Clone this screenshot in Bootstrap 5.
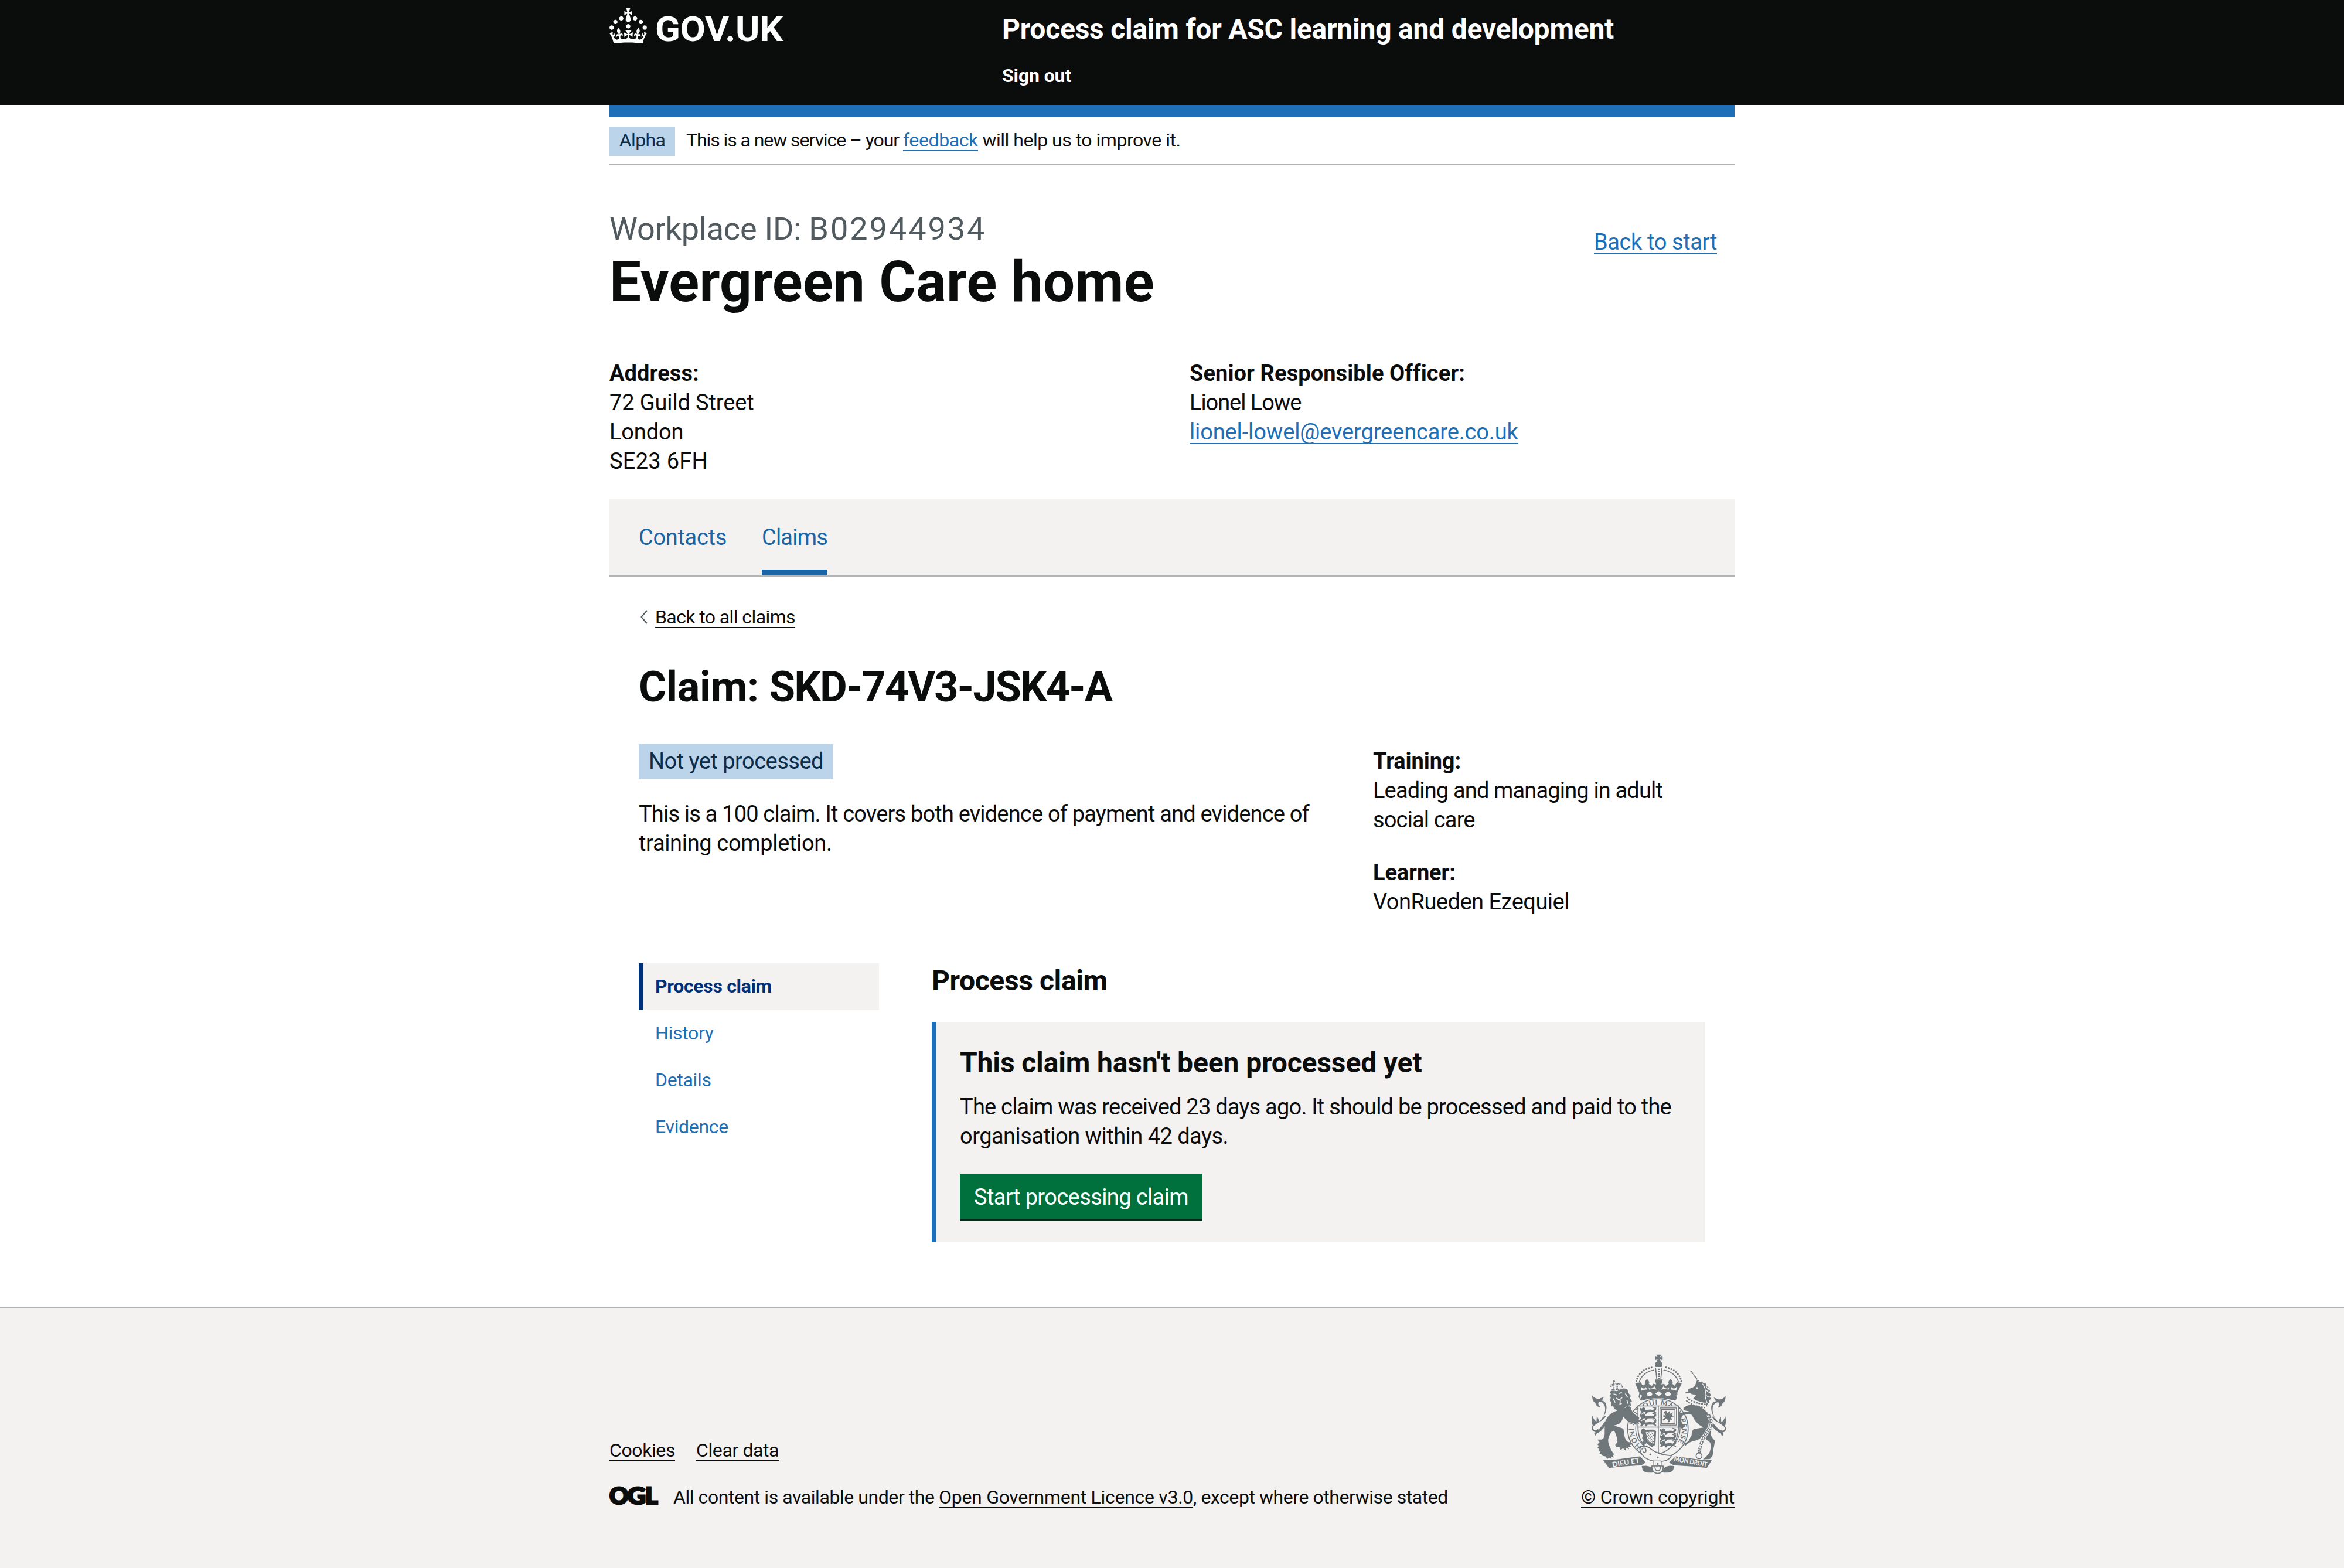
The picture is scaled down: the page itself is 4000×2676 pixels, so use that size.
<!DOCTYPE html>
<html lang="en">
<head>
<meta charset="utf-8">
<meta name="viewport" content="width=device-width, initial-scale=1">
<title>Process claim for ASC learning and development</title>
<link href="https://cdn.jsdelivr.net/npm/bootstrap@5.3.0/dist/css/bootstrap.min.css" rel="stylesheet">
<style>
  :root { --ink:#0b0c0c; --blue:#1d70b8; --grey:#f3f2f1; --rule:#b1b4b6; }
  body { font-family: Roboto, "Liberation Sans", sans-serif; font-size: 38px; line-height: 50px; color: var(--ink); background: #fff; letter-spacing: -.0035em; }
  p, h1, h2, h3, ul { margin: 0; }
  a { color: var(--blue); text-decoration-thickness: 2px; text-underline-offset: 6px; text-decoration-skip-ink: none; }
  a.ink { color: var(--ink); }
  .page-width { width: 1920px; margin: 0 auto; }
  .s32 { font-size: 32px; line-height: 40px; }
  .s48 { font-size: 48px; line-height: 60px; font-weight: 700; }
  .nowrap-line { white-space: nowrap; }

  /* header */
  .site-header { background: var(--ink); height: 180px; color: #fff; }
  .site-header a { color: #fff; text-decoration: none; }
  .logo-col { width: 670px; padding-top: 14px; }
  .logo-col svg { display: block; }
  .service-col { padding-top: 20px; }
  .service-name { letter-spacing: -.0049em; }
  .sign-out { margin-top: 29px; font-weight: 700; }
  .blue-bar { height: 20px; background: var(--blue); }

  /* phase banner */
  .phase { height: 82px; padding-top: 16px; gap: 19px; border-bottom: 2px solid var(--rule); font-size: 32px; line-height: 46px; }
  .phase-tag { width: 112px; height: 50px; text-align: center; background: #bbd4ea; color: #0c2d4a; letter-spacing: -.02em; }
  .ls-phase1 { letter-spacing: -.0337em; }
  .ls-phase2 { letter-spacing: -.0154em; }
  .ls-12 { letter-spacing: -.012em; }

  /* workplace heading */
  .workplace { padding-top: 79px; }
  .caption-id { font-size: 54px; line-height: 60px; color: #505a5f; letter-spacing: -.004em; }
  .caption-id span { letter-spacing: .055em; }
  .workplace-name { font-size: 96px; line-height: 100px; font-weight: 700; margin-top: 10px; letter-spacing: .003em; }
  .back-start { margin: 27px 30px 0 0; letter-spacing: -.0102em; }
  .contact-grid { padding: 81px 0 40px; }
  .contact-grid strong { letter-spacing: .002em; }
  .address-col { width: 990px; }
  .postcode { letter-spacing: .0073em; }
  .officer { letter-spacing: -.028em; }

  /* tabs */
  .tab-bar { background: var(--grey); border-bottom: 2px solid var(--rule); padding-left: 50px; gap: 60px; height: 132px; }
  .tab-bar a { color: #1a65a6; text-decoration: none; padding-top: 40px; letter-spacing: -.008em; }
  .tab-bar a.current { border-bottom: 10px solid #1a65a6; letter-spacing: -.0212em; }

  /* claim */
  .claim { padding: 49px 50px 0; }
  .back-all { gap: 13px; letter-spacing: -.0187em; padding-left: 3px; }
  .claim-title { font-size: 72px; line-height: 80px; font-weight: 700; margin: 60px 0 57px; letter-spacing: -.003em; }
  .claim-title span { letter-spacing: -.0265em; }
  .claim-left { width: 1253px; }
  .status-tag { display: inline-block; width: 332px; height: 60px; line-height: 58px; text-align: center; background: #bbd4ea; color: #0c2d4a; letter-spacing: -.0135em; vertical-align: top; }
  .claim-text { width: 1180px; margin-top: 34px; letter-spacing: -.0215em; }
  .claim-text span { letter-spacing: -.009em; }
  .claim-right { padding-top: 4px; }
  .claim-right strong { letter-spacing: -.003em; }
  .claim-right p + p { margin-top: 40px; }
  .tight { letter-spacing: -.0223em; }
  .ls-13 { letter-spacing: -.0132em; }
  .claim-body { margin-top: 80px; gap: 90px; }

  /* side navigation */
  .side-nav { width: 410px; font-size: 32px; line-height: 78px; letter-spacing: -.01em; }
  .side-nav a { display: block; height: 80px; padding-left: 20px; border-left: 8px solid transparent; text-decoration: none; }
  .side-nav a.current { color: #003078; border-color: #003078; background: var(--grey); font-weight: 700; }

  /* panel */
  .main-col { width: 1320px; }
  .main-title { letter-spacing: -.008em; }
  .status-panel { margin-top: 40px; border-left: 8px solid var(--blue); background: var(--grey); padding: 40px; height: 376px; }
  .status-panel p { margin-top: 20px; letter-spacing: -.0206em; }
  .status-panel p span { letter-spacing: -.014em; }
  .start-btn { margin-top: 40px; width: 414px; height: 76px; padding: 0; border: 0; border-radius: 0; background: #00703c; color: #fff; font-size: 38px; line-height: 78px; box-shadow: 0 4px 0 #002d18; letter-spacing: -.0161em; text-decoration: none; }

  /* footer */
  .site-footer { margin-top: 110px; height: 446px; border-top: 2px solid var(--rule); background: var(--grey); }
  .footer-row { height: 343px; }
  .footer-links { gap: 36px; margin-bottom: 40px; letter-spacing: -.0125em; }
  .licence { letter-spacing: -.0137em; }
  .licence a { letter-spacing: -.0092em; }
  .ogl { margin-right: 27px; display: block; margin-top: 1px; }
  .crest { width: 262px; letter-spacing: -.0055em; }
  .crest svg { display: block; margin: 0 auto 19px; }
</style>
</head>
<body>
<header class="site-header">
  <div class="page-width d-flex">
    <a class="logo-col" href="#" aria-label="GOV.UK">
      <svg width="320" height="80" viewBox="0 0 160 40" fill="#fff">
        <path fill-rule="evenodd" d="M22.6 10.4c-1 .4-2-.1-2.4-1-.4-.9.1-2 1-2.4.9-.4 2 .1 2.4 1s-.1 2-1 2.4m-5.9 6.7c-.9.4-2-.1-2.4-1-.4-.9.1-2 1-2.4.9-.4 2 .1 2.4 1s-.1 2-1 2.4m10.8-3.7c-1 .4-2-.1-2.4-1-.4-.9.1-2 1-2.4.9-.4 2 .1 2.4 1s0 2-1 2.4m3.3 4.8c-1 .4-2-.1-2.4-1-.4-.9.1-2 1-2.4.9-.4 2 .1 2.4 1s-.1 2-1 2.4M17 4.7l2.3 1.2V2.5l-2.3.7-.2-.2.9-3h-3.4l.9 3-.2.2c-.1.1-2.3-.7-2.3-.7v3.4L15 4.7c.1.1.1.2.2.2l-1.3 4c-.1.2-.1.4-.1.6 0 1.1.8 2 1.9 2.2h.7c1-.2 1.9-1.1 1.9-2.1 0-.2 0-.4-.1-.6l-1.3-4c-.1-.2 0-.2.1-.3m-7.6 5.7c.9.4 2-.1 2.4-1 .4-.9-.1-2-1-2.4-.9-.4-2 .1-2.4 1s0 2 1 2.4m-5 3c.9.4 2-.1 2.4-1 .4-.9-.1-2-1-2.4-.9-.4-2 .1-2.4 1s.1 2 1 2.4m-3.2 4.8c.9.4 2-.1 2.4-1 .4-.9-.1-2-1-2.4-.9-.4-2 .1-2.4 1s0 2 1 2.4m14.8 11c4.4 0 8.6.3 12.3.8 1.1-4.5 2.4-7 3.7-8.8l-2.5-.9c.2 1.3.3 1.9 0 2.7-.4-.4-.8-1.1-1.1-2.3l-1.2 4c.7-.5 1.3-.8 2-.9-1.1 2.5-2.6 3.1-3.5 3-1.1-.2-1.7-1.2-1.5-2.1.3-1.2 1.5-1.5 2.1-.1 1.1-2.3-.8-3-2-2.3 1.9-1.9 2.1-3.5.6-5.6-2.1 1.6-2.1 3.2-1.2 5.5-1.2-1.4-3.2-.6-2.5 1.6.9-1.4 2.1-.5 1.9.8-.2 1.1-1.7 2.1-3.5 1.9-2.7-.2-2.9-2.1-2.9-3.6.7-.1 1.9.5 2.9 1.9l.4-4.3c-1.1 1.1-2.1 1.4-3.2 1.4.4-1.2 2.1-3 2.1-3h-5.4s1.7 1.9 2.1 3c-1.1 0-2.1-.2-3.2-1.4l.4 4.3c1-1.4 2.2-2 2.9-1.9-.1 1.5-.2 3.4-2.9 3.6-1.9.2-3.4-.8-3.5-1.9-.2-1.3 1-2.2 1.9-.8.7-2.3-1.2-3-2.5-1.6.9-2.2.9-3.9-1.2-5.5-1.5 2-1.3 3.7.6 5.6-1.2-.7-3.1 0-2 2.3.6-1.4 1.8-1.1 2.1.1.2.9-.3 1.9-1.5 2.1-.9.2-2.4-.5-3.5-3 .6 0 1.2.3 2 .9l-1.2-4c-.3 1.1-.7 1.9-1.1 2.3-.3-.8-.2-1.4 0-2.7l-2.9.9C1.3 23 2.6 25.5 3.7 30c3.7-.5 7.9-.8 12.3-.8"/>
        <text x="39" y="28" font-family="Roboto" font-weight="700" font-size="29.5" textLength="109" lengthAdjust="spacingAndGlyphs">GOV.UK</text>
      </svg>
    </a>
    <div class="service-col">
      <div class="s48 service-name"><a href="#">Process claim for ASC learning and development</a></div>
      <div class="s32 sign-out"><a href="#">Sign out</a></div>
    </div>
  </div>
</header>

<div class="page-width">
  <div class="blue-bar"></div>
  <div class="phase d-flex align-items-start">
    <div class="phase-tag">Alpha</div>
    <div class="nowrap-line"><span class="ls-phase1">This is a new service – your </span><a class="ls-12" href="#">feedback</a><span class="ls-phase2"> will help us to improve it.</span></div>
  </div>

  <main>
    <div class="workplace d-flex justify-content-between align-items-start">
      <div>
        <div class="caption-id">Workplace ID: <span>B02944934</span></div>
        <h1 class="workplace-name">Evergreen Care home</h1>
      </div>
      <a class="back-start" href="#">Back to start</a>
    </div>
    <div class="contact-grid d-flex">
      <div class="address-col"><strong>Address:</strong><br>72 Guild Street<br>London<br><span class="postcode">SE23 6FH</span></div>
      <div><strong>Senior Responsible Officer:</strong><br><span class="officer">Lionel Lowe</span><br><a href="#">lionel-lowel@evergreencare.co.uk</a></div>
    </div>

    <nav class="tab-bar d-flex">
      <a href="#">Contacts</a>
      <a class="current" href="#">Claims</a>
    </nav>

    <section class="claim">
      <div class="back-all s32 d-flex align-items-center">
        <svg width="12" height="24" viewBox="0 0 12 24" fill="none" stroke="#505a5f" stroke-width="2"><path d="M11 1L1.5 12L11 23"/></svg>
        <a class="ink" href="#">Back to all claims</a>
      </div>
      <h2 class="claim-title">Claim: <span>SKD-74V3-JSK4-A</span></h2>
      <div class="d-flex">
        <div class="claim-left">
          <span class="status-tag">Not yet processed</span>
          <p class="claim-text">This is a 100 claim. It covers both evidence of payment and evidence of<br><span>training completion.</span></p>
        </div>
        <div class="claim-right">
          <p class="tight"><strong>Training:</strong><br>Leading and managing in adult<br>social care</p>
          <p class="ls-13"><strong>Learner:</strong><br>VonRueden Ezequiel</p>
        </div>
      </div>
      <div class="claim-body d-flex align-items-start">
        <nav class="side-nav">
          <a class="current" href="#">Process claim</a>
          <a href="#">History</a>
          <a href="#">Details</a>
          <a href="#">Evidence</a>
        </nav>
        <div class="main-col">
          <h2 class="s48 main-title">Process claim</h2>
          <div class="status-panel">
            <h3 class="s48">This claim hasn't been processed yet</h3>
            <p>The claim was received 23 days ago. It should be processed and paid to the<br><span>organisation within 42 days.</span></p>
            <a class="btn start-btn" href="#">Start processing claim</a>
          </div>
        </div>
      </div>
    </section>
  </main>
</div>

<footer class="site-footer">
  <div class="page-width footer-row d-flex justify-content-between align-items-end s32">
    <div>
      <div class="footer-links d-flex"><a class="ink" href="#">Cookies</a><a class="ink" href="#">Clear data</a></div>
      <div class="licence d-flex align-items-start">
        <svg class="ogl" width="82" height="34" viewBox="0 0 82 34" overflow="visible" fill="#0b0c0c" stroke="#0b0c0c" font-family="Lato" font-weight="900" font-size="39">
          <text x="0" y="31" stroke-width="3" textLength="32" lengthAdjust="spacingAndGlyphs">O</text>
          <text x="30.500" y="31" stroke-width="3" textLength="31" lengthAdjust="spacingAndGlyphs">G</text>
          <text x="61" y="31" stroke-width="3" textLength="21" lengthAdjust="spacingAndGlyphs">L</text>
        </svg>
        <div class="nowrap-line">All content is available under the <a class="ink" href="#">Open Government Licence v3.0</a>, except where otherwise stated</div>
      </div>
    </div>
    <div class="crest nowrap-line">
      <svg width="233" height="205" viewBox="160 64 700 616" fill="#6f777b" stroke="none" role="img" aria-label="Royal coat of arms">
        <!-- garter -->
        <ellipse cx="509" cy="446" rx="155" ry="153" fill="#f3f2f1" stroke="#6f777b" stroke-width="5"/>
        <ellipse cx="509" cy="446" rx="114" ry="114" fill="none" stroke="#6f777b" stroke-width="4"/>
        <path id="garter" d="M426 537A123 123 0 1 1 600 529" fill="none"/>
        <text font-family="Lato" font-weight="700" font-size="36"><textPath href="#garter" startOffset="0" textLength="560">HONI SOIT QUI MAL Y PENSE</textPath></text>
        <!-- shield -->
        <path d="M407 330H614V440C614 510 575 560 511 578C447 560 407 510 407 440Z" fill="#f3f2f1" stroke="#6f777b" stroke-width="5"/>
        <path d="M511 330V578M407 438H614" stroke="#6f777b" stroke-width="5"/>
        <g id="three-lions">
          <g id="pass-lion"><path d="M416 338l10 5 8-7 11 6-3 9 28-3 14 3 8-9-12-4 1-4 20 4-1 12-9 9 10 4-2 6-16-8-26 1-8 9-8-2 3-9-9 2-8 8-10-2 8-9-6-6z"/></g>
          <use href="#pass-lion" y="32"/><use href="#pass-lion" y="64"/>
        </g>
        <use href="#three-lions" x="102" y="108"/>
        <rect x="520" y="340" width="84" height="88" fill="none" stroke="#6f777b" stroke-width="4"/>
        <rect x="528" y="348" width="68" height="72" fill="none" stroke="#6f777b" stroke-width="3"/>
        <path d="M538 360l14-6 5 12 11-10 4 14 14-8-6 14 10 8-14 2 6 14-12 0 2 12-14 2 4-12-12-6-12 10-4-8 12-8-10-6 2-8 12 4z"/>
        <path d="M424 452l10-8 12 8 40-1 14 8-4 70-18 12-28-20-12 10-10-14 8-12-8-10 4-14-8-12z"/>
        <path d="M447 464l44-2-4 62-30-14z" fill="#f3f2f1"/>
        <path d="M452 466l36 50M462 464l27 38M474 464l16 22M450 480l36 42M450 496l26 26" stroke="#6f777b" stroke-width="3"/>
        <!-- crown -->
        <path d="M502 66h23l-5 14 13-5v20l-13-4 4 12c10 6 10 18 4 27h-30c-6-9-5-21 5-27l4-12-13 4V75l13 5z"/>
        <path d="M497 134l6 56M530 134l-6 56" stroke="#6f777b" stroke-width="5"/>
        <path d="M513.500 138V190" stroke="#6f777b" stroke-width="8" stroke-dasharray="7 5"/>
        <path d="M399 204C405 165 440 135 490 130M629 204C622 165 588 135 538 130" fill="none" stroke="#6f777b" stroke-width="9" stroke-linecap="round" stroke-dasharray=".1 14"/>
        <path d="M414 205C424 175 452 150 490 146M614 205C604 175 576 150 538 146" fill="none" stroke="#6f777b" stroke-width="5"/>
        <path d="M392 213l28-5 12 18 13-10c-8-10 4-18 8-26 6 8 16 16 9 26l16 12 8-12 14 4-6-26h40l-7 26 14-4 8 12 16-12c-7-10 3-18 9-26 5 8 16 16 9 26l12 10 12-18 25 5-24 50 3 20-13 20c-60-17-118-17-176 0l-12-20 4-20z"/>
        <path d="M420 222c4 20 22 24 28 10l5 14c-10-2-20 2-28 6zM460 232c6 14 24 10 30-4l12 18c-14-4-26-2-38 0zM608 222c-4 20-22 24-28 10l-5 14c10-2 20 2 28 6zM568 232c-6 14-24 10-30-4l-12 18c14-4 26-2 38 0z" fill="#f3f2f1"/>
        <path d="M513 254l17 13-17 12-17-12zM418 270l10 8-8 14-4-10zM612 270l-10 8 8 14 4-10z" fill="#f3f2f1"/>
        <ellipse cx="466" cy="269" rx="14" ry="11" fill="#f3f2f1"/><ellipse cx="561" cy="269" rx="14" ry="11" fill="#f3f2f1"/>
        <!-- lion -->
        <path d="M283 196v18M277 203h12" stroke="#6f777b" stroke-width="4"/>
        <path d="M268 232c2-20 56-26 60 2M272 248l52-4M283 214v34M300 218v28" fill="none" stroke="#6f777b" stroke-width="7" stroke-dasharray="6 4"/>
        <path d="M262 256l16-5 20 3 34-14 20 2 6 22 12 14-4 12 10 16-9 6 6 18-13-4-2 16-12-10-22 22-22-1-17-9-6-16-8 6-1-30-8 6 6-26-8-6 8-10z"/>
        <path d="M282 268l16 6M310 266l14-6M296 288l14 12 16-14M316 302l-2 18 10-2M342 266l12 20M280 292l10 20M350 300l6 18" fill="none" stroke="#f3f2f1" stroke-width="5"/>
        <path d="M312 340C340 352 352 326 368 334C374 352 380 370 402 380L414 390L410 398L420 408L410 412L412 422L400 418L392 426L384 416L366 414C350 408 340 392 330 384C328 410 312 426 284 430L332 446C336 462 334 478 340 492C346 508 352 516 366 516L380 524L366 530L372 542L356 538L362 552L346 544L342 558L330 546L318 556L314 542L296 540L290 530L302 514C300 492 292 466 284 456C272 460 268 466 262 478C252 498 252 512 258 528C264 546 272 560 276 566L286 580L276 580L284 594L270 590L272 602L258 594L250 602L240 588L226 586L218 578L208 578L214 564L204 562L208 550L198 546L206 534L198 526L210 518L200 502L220 502C230 500 234 490 236 476C236 452 236 434 238 412C246 386 270 362 300 354Z"/>
        <path d="M242 414C226 440 206 462 190 466" fill="none" stroke="#6f777b" stroke-width="14"/>
        <g id="tail">
          <path d="M190 464C166 460 162 434 184 424C210 414 234 388 238 354C242 324 226 308 210 308C200 310 202 328 214 334C206 338 192 330 188 314C174 306 172 290 172 276C184 292 196 292 208 294C216 288 226 288 234 282C226 292 228 298 220 302C240 304 250 324 244 352C240 372 232 384 222 392L244 378C236 396 224 404 208 412C196 420 178 428 176 440C176 452 186 456 196 452L204 446C202 456 196 464 190 484L182 470Z"/>
          <path d="M176 434C168 414 170 392 174 378C178 396 184 404 194 410L196 382C204 396 206 402 208 412Z"/>
        </g>
        <!-- unicorn -->
        <path d="M676 148L718 204" stroke="#6f777b" stroke-width="6" stroke-dasharray="9 3"/>
        <path d="M704 214L710 196L720 208L736 204L742 214L758 216L756 226L768 232L766 244L776 252L772 262L782 272L774 282L782 294L772 300L774 314L764 318L760 334L744 322C730 314 706 304 690 302C684 292 700 284 706 272L684 270L674 264L650 264L652 258L664 256L662 246C672 238 686 238 696 230Z"/>
        <circle cx="710" cy="238" r="5" fill="#f3f2f1"/>
        <path d="M738 216C750 232 756 250 752 270C750 286 756 300 762 316M756 228L764 240M758 250L770 260M756 276L770 284" fill="none" stroke="#f3f2f1" stroke-width="4"/>
        <path d="M640 352L640 340C656 326 678 318 704 326C738 336 770 362 782 396C790 420 788 440 780 458C776 474 782 490 802 508C798 528 796 544 792 560L790 584L776 602L740 604C756 590 770 578 776 562C782 540 782 524 772 512C756 500 742 492 734 486C726 500 706 508 688 510L664 520L650 534L640 522L662 514C672 504 672 494 682 480C682 466 684 456 694 448L742 440C712 424 694 402 684 376C664 368 644 370 632 382C628 396 628 408 632 416L644 434L634 448L622 438L616 420C616 400 614 380 622 366L670 358Z"/>
        <path d="M662 286C680 306 716 322 756 328" fill="none" stroke="#f3f2f1" stroke-width="26"/>
        <path d="M656 284C676 306 716 320 762 322M654 302C678 322 714 336 750 338" fill="none" stroke="#6f777b" stroke-width="7" stroke-dasharray="9 5"/>
        <path d="M780 414C800 440 814 456 832 464" fill="none" stroke="#6f777b" stroke-width="14"/>
        <use href="#tail" transform="matrix(-1 0 0 1 1028 3)"/>
        <path d="M768 374l14 30-6 36-32 50-16 40-8 40" fill="none" stroke="#f3f2f1" stroke-width="21"/>
        <path d="M768 374l14 30-6 36-32 50-16 40-8 40" fill="none" stroke="#6f777b" stroke-width="15" stroke-dasharray="20 5"/>
        <path d="M768 378l14 28-6 34-32 50-16 40-8 36" fill="none" stroke="#f3f2f1" stroke-width="6" stroke-dasharray="12 13"/>
        <circle cx="720" cy="586" r="15" fill="none" stroke="#6f777b" stroke-width="5"/>
        <!-- motto ribbon -->
        <path d="M228 607L270 608L418 588L446 620L424 634L330 640L258 648Z"/>
        <path d="M786 607L744 608L600 588L566 620L590 634L690 640L760 648Z"/>
        <path d="M426 638c30-6 56 2 62 32-28 4-52 2-58-14zM592 638c-30-6-56 2-62 32 28 4 52 2 58-14z"/>
        <text font-family="Lato" font-weight="700" font-size="36" fill="#f3f2f1" transform="translate(276 643) rotate(-9)" textLength="142" lengthAdjust="spacingAndGlyphs">DIEU ET</text>
        <text font-family="Lato" font-weight="700" font-size="34" fill="#f3f2f1" transform="translate(590 612) rotate(10)" textLength="172" lengthAdjust="spacingAndGlyphs">MON DROIT</text>
        <!-- buckle -->
        <path d="M416 545c14-14 38-12 58 6 24 20 52 30 104 34-10 26-52 36-98 26-44-10-62-38-64-66z" fill="#f3f2f1" stroke="#6f777b" stroke-width="5"/>
        <path d="M426 552c8-10 20-8 22 4s-10 16-16 8M508 566c10 8 20 12 34 16" fill="none" stroke="#6f777b" stroke-width="5"/>
        <circle cx="470" cy="578" r="5"/><circle cx="508" cy="594" r="5"/>
        <path d="M488 612h38v26h-38z" fill="#f3f2f1" stroke="#6f777b" stroke-width="4"/><circle cx="508" cy="627" r="5"/>
        <path d="M478 638h58c2 22-10 38-28 38s-32-16-30-38z" fill="#f3f2f1" stroke="#6f777b" stroke-width="5"/>
        <path d="M494 640c-2 30 30 30 28 0" fill="none" stroke="#6f777b" stroke-width="5"/>
      </svg>
      <a class="ink" href="#">© Crown copyright</a>
    </div>
  </div>
</footer>
<script src="https://cdn.jsdelivr.net/npm/bootstrap@5.3.0/dist/js/bootstrap.bundle.min.js"></script>
</body>
</html>
